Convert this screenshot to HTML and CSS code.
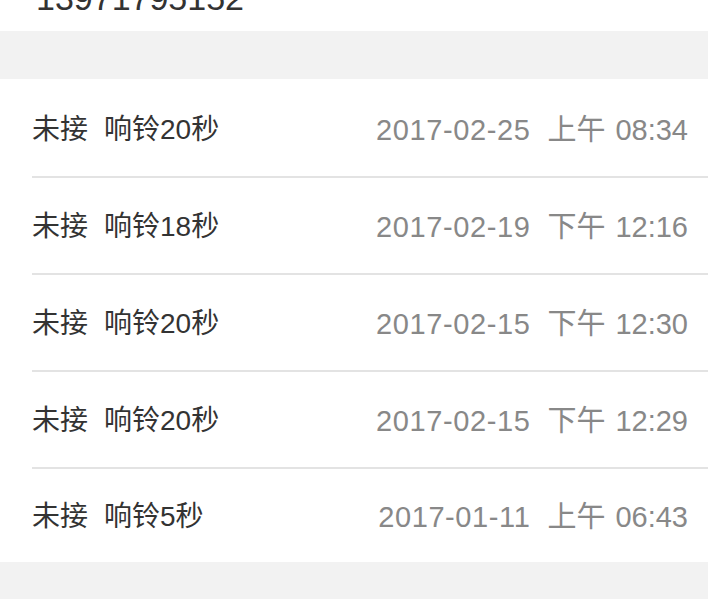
FILE: index.html
```html
<!DOCTYPE html>
<html lang="zh">
<head>
<meta charset="utf-8">
<link rel="stylesheet" href="styles.css">
</head>
<body>
<div class="header"><div class="number">13971795152</div></div>
<div class="gap"></div>
<ul class="list">
  <li class="row"><span class="left"><span class="status">未接</span>响铃20秒</span><span class="right"><span class="date">2017-02-25</span><span class="ampm">上午</span><span class="time">08:34</span></span></li>
  <li class="row"><span class="left"><span class="status">未接</span>响铃18秒</span><span class="right"><span class="date">2017-02-19</span><span class="ampm">下午</span><span class="time">12:16</span></span></li>
  <li class="row"><span class="left"><span class="status">未接</span>响铃20秒</span><span class="right"><span class="date">2017-02-15</span><span class="ampm">下午</span><span class="time">12:30</span></span></li>
  <li class="row"><span class="left"><span class="status">未接</span>响铃20秒</span><span class="right"><span class="date">2017-02-15</span><span class="ampm">下午</span><span class="time">12:29</span></span></li>
  <li class="row"><span class="left"><span class="status">未接</span>响铃5秒</span><span class="right"><span class="date">2017-01-11</span><span class="ampm">上午</span><span class="time">06:43</span></span></li>
</ul>
</body>
</html>
```
FILE: styles.css
```css
html, body {
  margin: 0;
  padding: 0;
}
body {
  background: #f2f2f2;
  font-family: "Liberation Sans", "Noto Sans CJK SC", sans-serif;
  height: 599px;
  overflow: hidden;
}
.header {
  background: #fff;
  height: 31px;
  overflow: hidden;
}
.number {
  margin-top: -22px;
  padding-left: 36px;
  font-size: 34px;
  line-height: 40px;
  color: #333;
}
.gap {
  height: 48px;
}
.list {
  list-style: none;
  margin: 0;
  padding: 2px 0 0 32px;
  background: #fff;
}
.row {
  box-sizing: border-box;
  height: 97px;
  display: flex;
  align-items: center;
  justify-content: space-between;
  padding: 2px 20px 0 0;
  border-bottom: 2px solid #e3e3e3;
  font-size: 28px;
  line-height: 40px;
}
.row:last-child {
  border-bottom: none;
  height: 93px;
}
.left {
  color: #333;
  white-space: nowrap;
}
.status {
  margin-right: 16px;
}
.right {
  color: #888;
  white-space: nowrap;
  font-size: 29px;
}
.date {
  margin-right: 17px;
  letter-spacing: 0.6px;
}
.ampm {
  margin-right: 10px;
}
```
